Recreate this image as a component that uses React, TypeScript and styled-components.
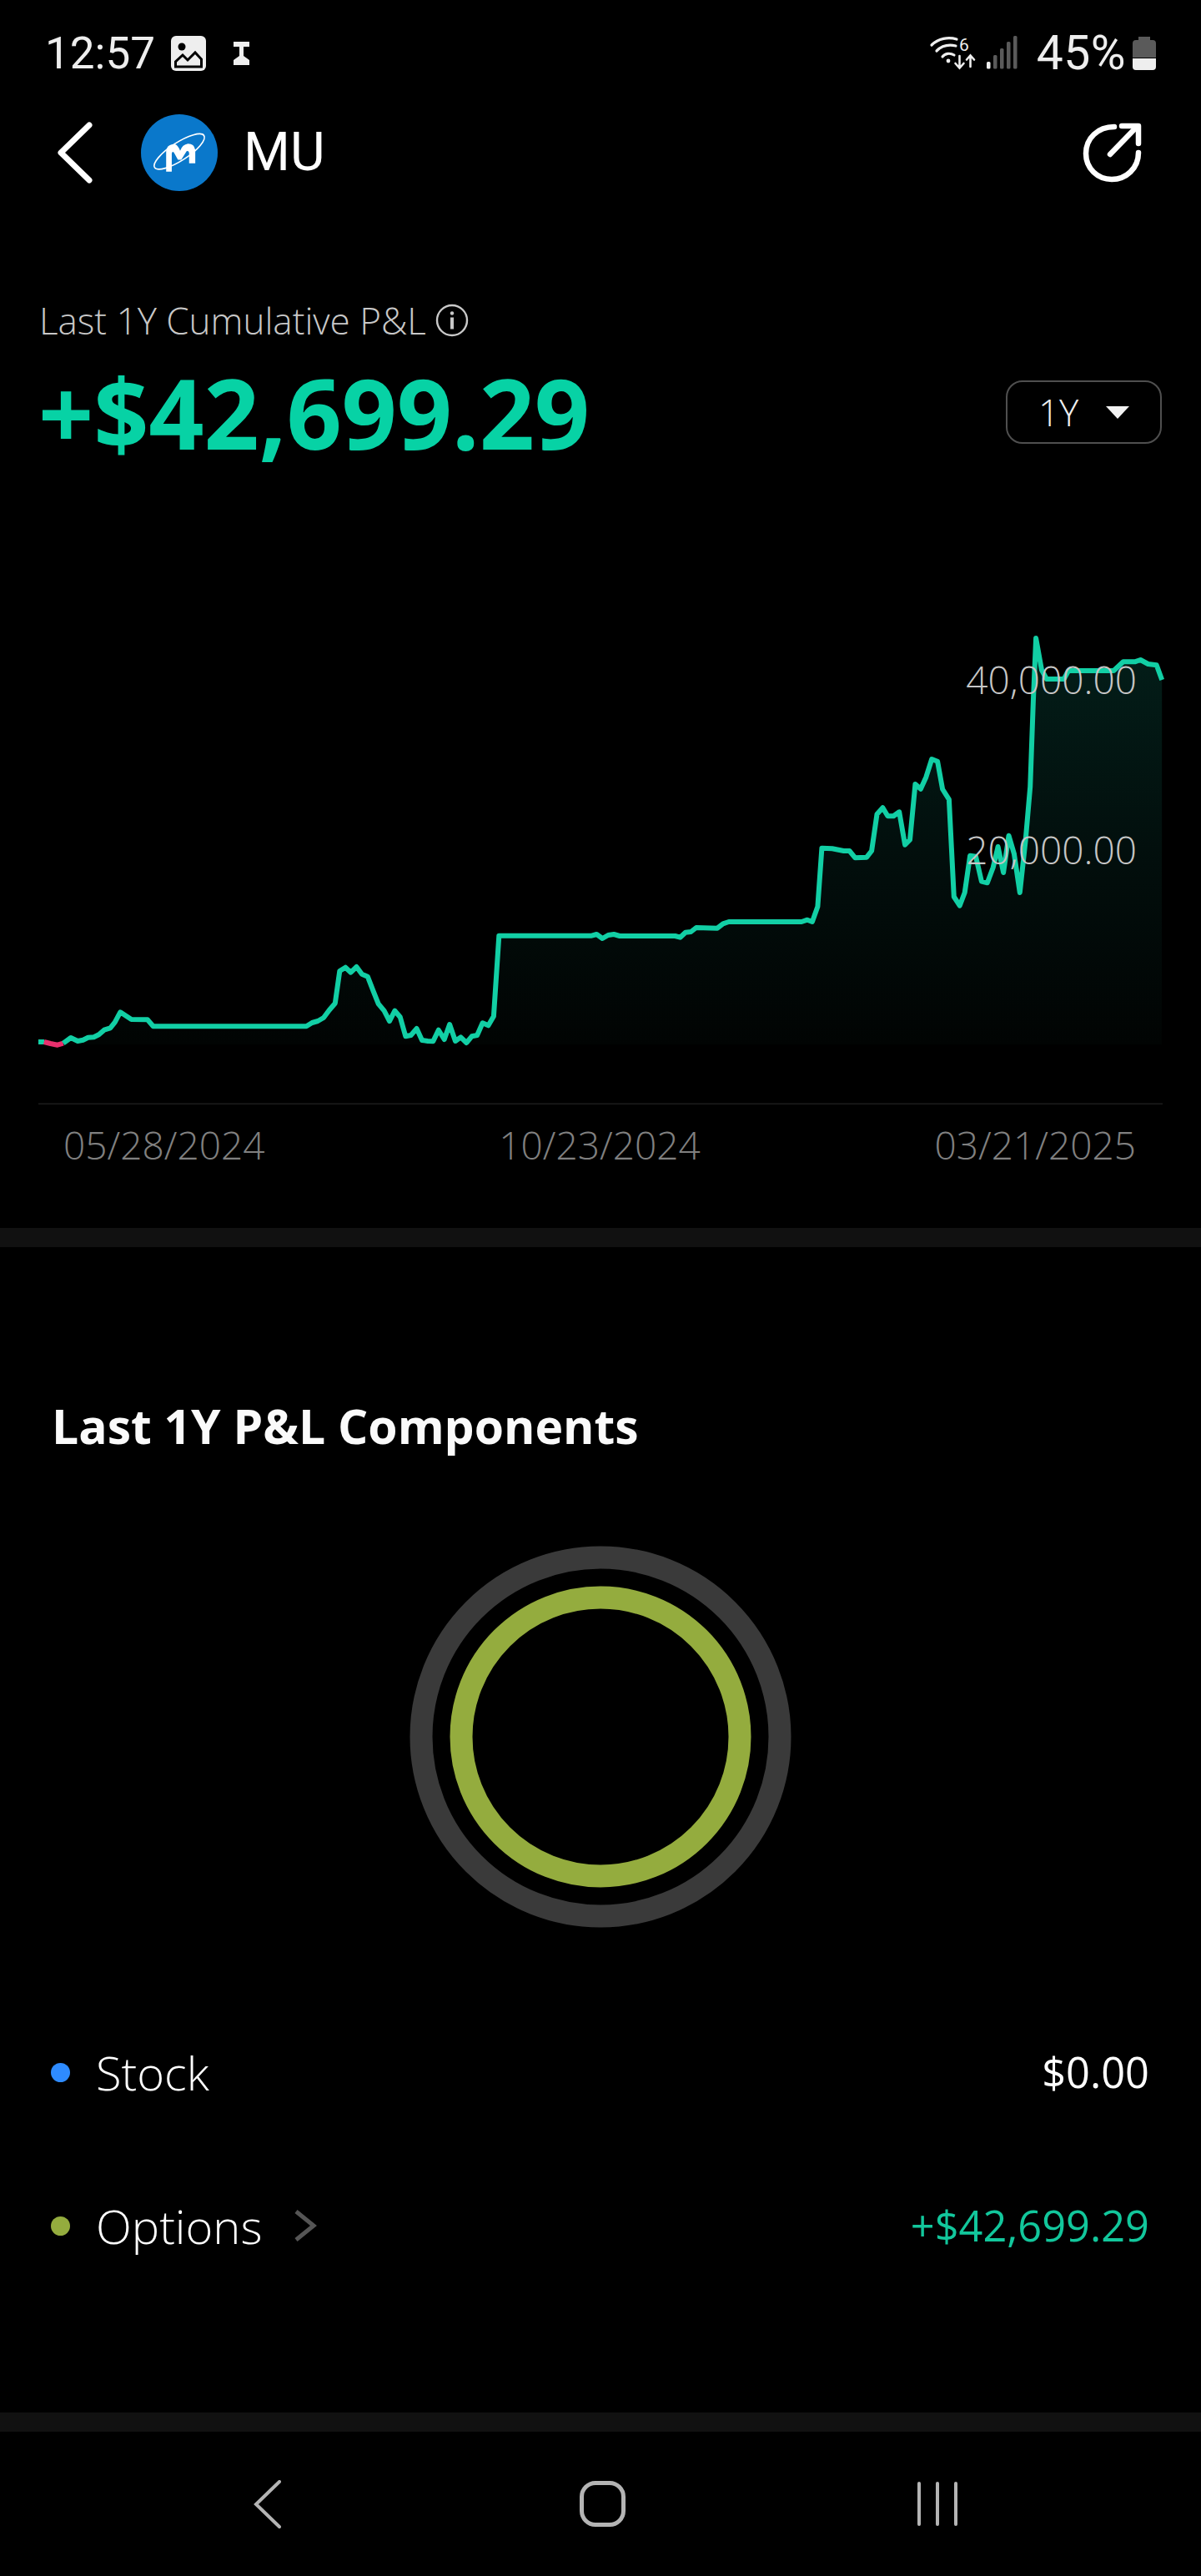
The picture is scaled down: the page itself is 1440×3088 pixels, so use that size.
import React from 'react';
import styled, { createGlobalStyle } from 'styled-components';

const GlobalStyle = createGlobalStyle`
  html, body {
    margin: 0;
    padding: 0;
    background: #000;
  }
`;

// traced from the reference, [x, y] in page pixels
const rawLeft = [
  [115, 447], [132, 453], [150, 458], [165, 452], [185, 432], [203, 444], [217, 440], [230, 431], [245, 430], [258, 421],
  [272, 404], [288, 397], [300, 376], [314, 340], [343, 366], [385, 367], [400, 391], [800, 391], [815, 378], [830, 372],
  [845, 360], [860, 332], [875, 308], [887, 192], [902, 179], [916, 197], [931, 177], [945, 203], [960, 212], [975, 265],
  [988, 310], [1003, 335], [1017, 372], [1031, 335], [1045, 358], [1059, 427], [1073, 423], [1088, 399], [1102, 441],
  [1117, 444], [1131, 445], [1145, 404], [1160, 438], [1174, 384], [1189, 444], [1203, 430], [1218, 450], [1232, 427],
  [1246, 423], [1260, 379], [1275, 388], [1289, 355], [1303, 65], [1545, 65], [1558, 60],
];
const rawRight = [
  [5, 1155], [20, 1143], [35, 1140], [50, 1146], [195, 1146], [208, 1151], [222, 1133], [236, 1131], [250, 1116],
  [305, 1118], [320, 1102], [335, 1095], [525, 1095], [540, 1088], [553, 1095], [567, 1040], [578, 830], [605, 832],
  [635, 840], [650, 840], [665, 865], [695, 863], [708, 840], [722, 708], [737, 685], [750, 715], [765, 715], [780, 700],
  [795, 818], [808, 800], [822, 600], [836, 617], [850, 575], [865, 510], [880, 518], [893, 618], [910, 655], [923, 1005],
  [938, 1037], [951, 990], [965, 857], [980, 860], [995, 950], [1010, 955], [1025, 900], [1038, 825], [1052, 918],
  [1066, 785], [1080, 850], [1095, 990], [1110, 800], [1122, 610], [1130, 300], [1137, 75], [1152, 190], [1165, 222],
  [1210, 222], [1222, 192], [1340, 192], [1365, 160], [1395, 160], [1410, 153], [1430, 168], [1452, 172], [1466, 225],
];

const X_SCALE = 1568 / 720;
const linePoints = [
  ...rawLeft.map(([x, y]) => [x / X_SCALE, 1100 + y / 3]),
  ...rawRight.map(([x, y]) => [720 + x / X_SCALE, 740 + y / 3]),
];
const toPath = (pts: number[][]) => pts.map(([x, y]) => `${x.toFixed(1)},${y.toFixed(1)}`).join(' ');
const tealPoints = toPath(linePoints.slice(3));
const pinkPoints = toPath(linePoints.slice(0, 4));
const areaPoints = `46,1252 ${toPath(linePoints)} 1393,1252`;

const Page = styled.div`
  width: 1440px;
  height: 3088px;
  background: #000;
  overflow: hidden;
  font-family: 'Open Sans', 'Noto Sans', sans-serif;
`;

const StatusBar = styled.div`
  height: 128px;
  display: flex;
  align-items: center;
  justify-content: space-between;
  padding: 0 54px 0 54px;
  color: #eee;
  font-family: Roboto, sans-serif;
  font-weight: 400;
  font-size: 53px;
`;

const StatusGroup = styled.div`
  display: flex;
  align-items: center;
`;

const Clock = styled.span`
  line-height: 60px;
  margin-right: 19px;
`;

const Battery = styled.span`
  line-height: 60px;
  margin: 0 8px 0 21px;
  font-size: 57px;
  letter-spacing: 0.5px;
`;

const Header = styled.header`
  height: 110px;
  display: flex;
  align-items: center;
  padding: 0 70px 0 66px;
`;

const Ticker = styled.span`
  margin-left: 31px;
  color: #fff;
  font-family: Roboto, sans-serif;
  font-size: 64px;
  line-height: 70px;
`;

const LogoWrap = styled.div`
  margin-left: 55px;
  width: 92px;
  height: 92px;
`;

const ShareWrap = styled.div`
  margin-left: auto;
  display: flex;
`;

const Summary = styled.section`
  height: 462px;
  box-sizing: border-box;
  padding: 124px 47px 0 47px;
`;

const SummaryLabel = styled.div`
  display: flex;
  align-items: center;
  gap: 11px;
  height: 44px;
  color: #c8c8c8;
  font-size: 44px;
  font-weight: 300;
`;

const ValueRow = styled.div`
  display: flex;
  align-items: center;
  justify-content: space-between;
  margin-top: 28px;
  height: 120px;
`;

const BigValue = styled.div`
  color: #07d2a5;
  font-size: 116px;
  font-weight: 700;
  line-height: 120px;
  letter-spacing: -0.2px;
  margin-left: -1px;
`;

const RangeButton = styled.div`
  box-sizing: border-box;
  width: 187px;
  height: 76px;
  border: 2px solid #4f4f4f;
  border-radius: 20px;
  display: flex;
  align-items: center;
  padding-left: 37px;
  gap: 33px;
  color: #eee;
  font-size: 44px;
  font-weight: 300;
`;

const Caret = styled.i`
  width: 0;
  height: 0;
  border-left: 14px solid transparent;
  border-right: 14px solid transparent;
  border-top: 15px solid #f2f2f2;
`;

const ChartBox = styled.div`
  position: relative;
  height: 624px;
`;

const ChartSvg = styled.svg`
  display: block;
  width: 1440px;
  height: 624px;
`;

const AxisLabel = styled.span<{ $top: number }>`
  position: absolute;
  right: 77px;
  top: ${(p) => p.$top}px;
  color: #c6c6c6;
  font-size: 46px;
  font-weight: 300;
  line-height: 60px;
`;

const Dates = styled.div`
  height: 148px;
  box-sizing: border-box;
  padding: 18px 78px 0 76px;
  display: flex;
  justify-content: space-between;
  color: #808080;
  font-size: 46px;
  font-weight: 300;
  line-height: 60px;
`;

const Divider = styled.div`
  height: 23px;
  background: #111;
`;

const Components = styled.section`
  height: 1397px;
  box-sizing: border-box;
  padding-top: 176px;
`;

const Heading = styled.h2`
  margin: 0;
  padding-left: 62px;
  color: #fafafa;
  font-size: 57px;
  font-weight: 700;
  line-height: 76px;
`;

const DonutWrap = styled.div`
  display: flex;
  justify-content: center;
  margin-top: 106px;
`;

const LegendRow = styled.div<{ $top: number }>`
  display: flex;
  align-items: center;
  height: 70px;
  margin-top: ${(p) => p.$top}px;
  padding: 0 62px 0 61px;
`;

const Dot = styled.i<{ $color: string }>`
  width: 23px;
  height: 23px;
  border-radius: 50%;
  background: ${(p) => p.$color};
`;

const LegendName = styled.span`
  margin-left: 31px;
  color: #fff;
  font-size: 56px;
  font-weight: 300;
  line-height: 70px;
`;

const LegendChevron = styled.svg`
  margin-left: 37px;
`;

const LegendValue = styled.span<{ $color: string }>`
  margin-left: auto;
  color: ${(p) => p.$color};
  font-size: 50.5px;
  font-weight: 400;
  line-height: 70px;
`;

const NavBar = styled.nav`
  height: 173px;
  position: relative;
  display: flex;
  align-items: center;
  padding-left: 303px;
`;

const NavHome = styled.div`
  box-sizing: border-box;
  width: 55px;
  height: 55px;
  margin-left: 358px;
  border: 5px solid #b4b4b4;
  border-radius: 19px;
`;

const NavRecents = styled.div`
  display: flex;
  gap: 18px;
  margin-left: 350px;
`;

const NavBarLine = styled.i`
  width: 4px;
  height: 53px;
  border-radius: 2px;
  background: #b4b4b4;
`;

const GalleryIcon = () => (
  <svg width="42" height="42" viewBox="0 0 42 42">
    <rect width="42" height="42" rx="6" fill="#eee" />
    <circle cx="13" cy="13" r="4.5" fill="#000" />
    <path d="M5.5 37 V31 L14 23 L20 29 L29 20 L36.5 28 V37 Z" fill="none" stroke="#000" strokeWidth="3" />
  </svg>
);

const CursorIcon = () => (
  <svg width="19" height="28" viewBox="0 0 19 28" style={{ marginLeft: 33 }}>
    <path d="M0 0 H19 V6 H12 V17 L19 22 H0 L7 17 V6 H0 Z" fill="#eee" />
    <rect y="22" width="19" height="6" fill="#eee" />
  </svg>
);

const NetworkIcons = () => (
  <svg width="115" height="60" viewBox="0 0 115 60">
    <g fill="none" stroke="#eee" strokeWidth="3.2" strokeLinecap="round">
      <path d="M10 20 C18 12 30 10 40 13" />
      <path d="M16 27 C22 21 30 19 39 21" />
      <path d="M23 34 C26 30 32 29 37 32" />
      <path d="M43.5 33 V47 M38.5 42 L43.5 47.5 L48.5 42" strokeWidth="2.6" />
      <path d="M56.5 46 V33 M52 37.5 L56.5 32.5 L61 37.5" strokeWidth="2.6" />
    </g>
    <circle cx="30" cy="39" r="2.4" fill="#eee" />
    <text x="43" y="27" fontFamily="Roboto, sans-serif" fontSize="21" fill="#eee">6</text>
    <rect x="76" y="40" width="4.5" height="8.5" rx="1.5" fill="#eee" />
    <rect x="84" y="32" width="4.5" height="16.5" rx="1.5" fill="#5a5a5a" />
    <rect x="92" y="24" width="4.5" height="24.5" rx="1.5" fill="#5a5a5a" />
    <rect x="100" y="16" width="4.5" height="32.5" rx="1.5" fill="#5a5a5a" />
    <rect x="108" y="9" width="4.5" height="39.5" rx="1.5" fill="#5a5a5a" />
  </svg>
);

const BatteryIcon = () => (
  <svg width="28" height="40" viewBox="0 0 28 40">
    <path d="M7 0 H21 V4 H24 Q28 4 28 8 V25 H0 V8 Q0 4 4 4 H7 Z" fill="#5a5a5a" />
    <path d="M0 26 H28 V36 Q28 40 24 40 H4 Q0 40 0 36 Z" fill="#eee" />
  </svg>
);

const BackIcon = () => (
  <svg width="48" height="80" viewBox="0 0 48 80">
    <path d="M41 7 L7 40 L41 73" fill="none" stroke="#fff" strokeWidth="7" strokeLinecap="round" strokeLinejoin="round" />
  </svg>
);

const MicronLogo = () => (
  <svg width="92" height="92" viewBox="28 20 274 274">
    <circle cx="165" cy="157" r="137" fill="#0a78cb" />
    <ellipse cx="165" cy="153" rx="105" ry="32" transform="rotate(-33 165 153)" fill="none" stroke="#fff" strokeWidth="5" />
    <path
      d="M118 225 V152 Q120 130 140 127 L150 127 Q160 130 168 150 Q176 128 196 125 Q218 125 222 147 V195 H200 V158 Q198 148 191 152 L172 182 H160 L146 157 Q140 150 138 160 V225 Z"
      fill="#fff"
    />
  </svg>
);

const ShareIcon = () => (
  <svg width="72" height="72" viewBox="0 0 72 72">
    <g fill="none" stroke="#fff" strokeWidth="6.5" strokeLinecap="round" strokeLinejoin="round">
      <path d="M38 5 C18 5 4 19 4 37 C4 55 18 68 35 68 C52 68 67 55 67 36" />
      <path d="M33 38 L65 5" />
      <path d="M47 4 H67 V25" />
    </g>
  </svg>
);

const InfoIcon = () => (
  <svg width="40" height="40" viewBox="0 0 40 40">
    <circle cx="20" cy="20" r="18" fill="none" stroke="#c8c8c8" strokeWidth="2.4" />
    <circle cx="20" cy="11.5" r="2.2" fill="#c8c8c8" />
    <rect x="18" y="16.5" width="4" height="14" fill="#c8c8c8" />
  </svg>
);

const Donut = () => (
  <svg width="458" height="458" viewBox="0 0 458 458">
    <circle cx="229" cy="229" r="215" fill="none" stroke="#3a3a3a" strokeWidth="27" />
    <circle cx="229" cy="229" r="167" fill="none" stroke="#94ac3e" strokeWidth="27" />
  </svg>
);

export default function App() {
  return (
    <Page>
      <GlobalStyle />
      <StatusBar>
        <StatusGroup>
          <Clock>12:57</Clock>
          <GalleryIcon />
          <CursorIcon />
        </StatusGroup>
        <StatusGroup>
          <NetworkIcons />
          <Battery>45%</Battery>
          <BatteryIcon />
        </StatusGroup>
      </StatusBar>

      <Header>
        <BackIcon />
        <LogoWrap>
          <MicronLogo />
        </LogoWrap>
        <Ticker>MU</Ticker>
        <ShareWrap>
          <ShareIcon />
        </ShareWrap>
      </Header>

      <Summary>
        <SummaryLabel>
          Last 1Y Cumulative P&amp;L
          <InfoIcon />
        </SummaryLabel>
        <ValueRow>
          <BigValue>+$42,699.29</BigValue>
          <RangeButton>
            1Y
            <Caret />
          </RangeButton>
        </ValueRow>
      </Summary>

      <ChartBox>
        <ChartSvg viewBox="0 700 1440 624">
          <defs>
            <linearGradient id="pnlFill" gradientUnits="userSpaceOnUse" x1="0" y1="770" x2="0" y2="1252">
              <stop offset="0" stopColor="#031e19" />
              <stop offset="0.55" stopColor="#020e0c" />
              <stop offset="1" stopColor="#010403" />
            </linearGradient>
          </defs>
          <polygon points={areaPoints} fill="url(#pnlFill)" />
          <line x1="46" y1="1323.5" x2="1394" y2="1323.5" stroke="#1c1c1c" strokeWidth="2" />
          <line x1="46" y1="1249" x2="53" y2="1249" stroke="#12cfa5" strokeWidth="6" />
          <polyline points={pinkPoints} fill="none" stroke="#e8306e" strokeWidth="6" strokeLinejoin="round" />
          <polyline points={tealPoints} fill="none" stroke="#12cfa5" strokeWidth="6" strokeLinejoin="round" />
        </ChartSvg>
        <AxisLabel $top={84}>40,000.00</AxisLabel>
        <AxisLabel $top={288}>20,000.00</AxisLabel>
      </ChartBox>

      <Dates>
        <span>05/28/2024</span>
        <span>10/23/2024</span>
        <span>03/21/2025</span>
      </Dates>

      <Divider />

      <Components>
        <Heading>Last 1Y P&amp;L Components</Heading>
        <DonutWrap>
          <Donut />
        </DonutWrap>
        <LegendRow $top={138}>
          <Dot $color="#2e8bff" />
          <LegendName>Stock</LegendName>
          <LegendValue $color="#fff">$0.00</LegendValue>
        </LegendRow>
        <LegendRow $top={114}>
          <Dot $color="#94ac3e" />
          <LegendName>Options</LegendName>
          <LegendChevron width="28" height="38" viewBox="0 0 28 38">
            <path d="M3 2 L24 19 L3 36" fill="none" stroke="#555" strokeWidth="5" />
          </LegendChevron>
          <LegendValue $color="#12c79c">+$42,699.29</LegendValue>
        </LegendRow>
      </Components>

      <Divider />

      <NavBar>
        <svg width="34" height="58" viewBox="0 0 34 58">
          <path d="M32 2 L4 29 L32 56" fill="none" stroke="#b4b4b4" strokeWidth="4" strokeLinecap="round" />
        </svg>
        <NavHome />
        <NavRecents>
          <NavBarLine />
          <NavBarLine />
          <NavBarLine />
        </NavRecents>
      </NavBar>
    </Page>
  );
}
